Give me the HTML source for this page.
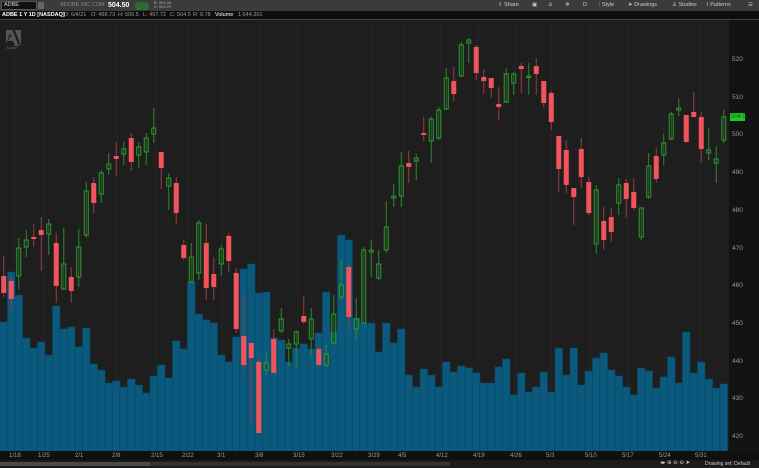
<!DOCTYPE html>
<html><head><meta charset="utf-8"><style>
*{margin:0;padding:0;box-sizing:border-box}
body{width:759px;height:468px;overflow:hidden;background:#1e1e1e;font-family:"Liberation Sans",sans-serif;position:relative}
.top{position:absolute;left:0;top:0;width:759px;height:11px;background:#3b3b3b}
.info{position:absolute;left:0;top:11px;width:759px;height:9px;background:#0e0e0e;border-bottom:1px solid #444}
.t{position:absolute;font-size:5.5px;color:#ccc;white-space:nowrap;line-height:1}
.ax{position:absolute;font-size:6.5px;color:#9a9a9a;line-height:1}
.rp{position:absolute;left:729px;top:20px;width:30px;height:431px;background:#131313}
.xa{position:absolute;left:0;top:451px;width:759px;height:9px;background:#101010}
.bb{position:absolute;left:0;top:460px;width:759px;height:8px;background:#1b1b1b}
</style></head><body>
<div class="top">
 <div style="position:absolute;left:1px;top:1px;width:36px;height:9px;background:#111;border:1px solid #555"></div>
 <div class="t" style="left:4px;top:3px;color:#ddd">ADBE</div>
 <div style="position:absolute;left:38px;top:2px;width:6px;height:7px;background:#666"></div>
 <div class="t" style="left:60px;top:3px;color:#888">ADOBE INC COM</div>
 <div class="t" style="left:108px;top:2px;color:#fff;font-weight:bold;font-size:7px">504.50</div>
 <div style="position:absolute;left:135px;top:2px;width:14px;height:8px;background:#2f6a35;border-radius:3px"></div>
 <div class="t" style="left:154px;top:1px;font-size:4px;color:#aaa">B: 504.36<br>A: 504.29</div>
 <div class="t" style="left:498px;top:3px">⇪ Share</div>
 <div class="t" style="left:532px;top:3px">▣</div>
 <div class="t" style="left:548px;top:3px">♙</div>
 <div class="t" style="left:565px;top:3px">✲</div>
 <div class="t" style="left:583px;top:3px">D</div>
 <div class="t" style="left:599px;top:3px">⫶ Style</div>
 <div class="t" style="left:628px;top:3px">➤ Drawings</div>
 <div class="t" style="left:672px;top:3px">♙ Studies</div>
 <div class="t" style="left:706px;top:3px">⌇ Patterns</div>
 <div class="t" style="left:748px;top:3px">☰</div>
</div>
<div class="info">
 <div class="t" style="left:2px;top:2px;color:#fff;font-weight:bold">ADBE 1 Y 1D [NASDAQ]</div>
 <div class="t" style="left:64px;top:2px;color:#999">D: 6/4/21</div>
 <div class="t" style="left:91px;top:2px;color:#999">O: 498.73</div>
 <div class="t" style="left:118px;top:2px;color:#999">H: 506.5</div>
 <div class="t" style="left:143px;top:2px;color:#999">L: 497.72</div>
 <div class="t" style="left:170px;top:2px;color:#999">C: 504.5</div>
 <div class="t" style="left:193px;top:2px;color:#999">R: 8.78</div>
 <div class="t" style="left:215px;top:2px;color:#fff">Volume</div>
 <div class="t" style="left:238px;top:2px;color:#999">1,644,301</div>
</div>
<div class="rp"></div>
<svg id="ch" width="729" height="431" style="position:absolute;left:0;top:20px" viewBox="0 20 729 431"></svg>
<svg width="20" height="22" style="position:absolute;left:4px;top:28px"><path d="M2 2h6l7 16h-4l-2-5h-5l2-4h2l-2-4-4 11H2z M11 2h6v16z" fill="#555"/><text x="2" y="21" font-size="4" fill="#666" font-family="Liberation Sans">Adobe</text></svg>
<div style="position:absolute;left:730px;top:113px;width:15px;height:8px;background:#22c922"></div>
<div class="ax" style="left:731px;top:114px;color:#062;font-size:6px">504.5</div>
<div id="yl"></div>
<div class="xa"></div>
<div id="xl"></div>
<div class="bb">
 <div style="position:absolute;left:0;top:2px;width:150px;height:4px;background:#4a4a4a"></div>
 <div style="position:absolute;left:150px;top:2px;width:300px;height:4px;background:#333"></div>
 <div class="t" style="left:660px;top:1px;color:#ccc">◂▸ ⊕ ⊖ ⊖ ➤</div>
 <div class="t" style="left:705px;top:2px;font-size:5px">Drawing set: Default</div>
</div>
<script>
var C=[["r",256,297,276,293],["r",276,310,281,299],["g",238,290,248,276],["g",230,257,240,247],["r",224,247,237,239],["r",217,271,230,235],["g",219,255,224,234],["r",233,303,243,286],["g",228,290,264,289],["r",267,303,277,291],["g",229,287,247,277],["g",182,238,191,235],["r",177,213,183,203],["g",170,203,173,194],["g",153,175,164,169],["r",142,176,156,159],["g",142,165,149,154],["r",133,171,138,162],["g",142,168,147,155],["g",133,165,138,152],["g",108,143,128,134],["r",152,189,152,168],["g",173,210,178,186],["r",177,224,183,213],["r",240,260,245,258],["g",243,283,257,282],["g",220,280,223,273],["r",224,300,243,288],["r",257,300,274,287],["g",245,276,249,264],["r",233,272,236,261],["r",268,333,273,329],["r",295,370,336,365],["r",343,423,343,358],["r",358,433,362,433],["g",352,375,363,370],["r",329,373,339,373],["g",308,333,319,331],["g",339,367,344,348],["g",330,368,332,344],["r",296,324,316,322],["g",308,357,319,339],["r",347,366,349,365],["g",345,367,354,365],["g",295,344,314,343],["g",260,300,285,297],["r",264,330,267,317],["g",298,340,319,329],["g",247,323,250,323],["g",240,277,250,252],["g",250,280,264,278],["g",201,253,227,250],["g",184,207,196,198],["g",152,207,166,196],["r",151,183,163,167],["g",154,180,158,161],["r",117,141,133,135],["g",117,163,119,141],["g",107,140,110,138],["g",68,110,78,109],["r",67,101,81,94],["g",42,77,45,76],["g",38,63,40,43],["r",45,80,47,73],["r",69,94,77,81],["r",78,98,78,88],["r",87,120,104,107],["g",68,103,74,102],["g",72,95,74,83],["r",63,93,66,69],["g",63,95,76,77],["r",58,95,66,74],["r",81,107,81,103],["r",91,130,93,122],["r",136,192,136,169],["r",140,193,150,185],["r",188,225,188,197],["r",138,188,149,177],["r",177,215,182,213],["g",185,254,190,244],["r",207,250,221,240],["r",208,242,217,232],["g",178,215,185,203],["r",179,217,183,199],["r",178,210,192,208],["g",207,240,208,237],["g",153,199,166,197],["r",148,183,156,179],["g",134,165,143,155],["g",112,140,114,139],["g",98,116,108,110],["r",115,143,115,142],["r",92,117,112,117],["r",112,163,117,149],["g",128,160,150,153],["g",146,183,159,163],["g",110,143,117,140]];
var V=[322,272,295,338,348,342,355,306,329,327,347,328,364,370,383,381,387,379,385,393,376,365,378,341,349,282,314,320,323,355,362,337,269,264,293,292,338,340,362,348,344,349,333,292,332,235,240,318,323,323,352,323,343,329,375,387,369,375,387,362,372,366,368,373,383,383,367,359,395,373,392,387,372,392,348,375,348,385,371,358,353,370,376,387,395,368,371,388,377,357,383,332,373,362,379,388,384];
var s='<rect x="0" y="20" width="729" height="431" fill="#1e1e1e"/>';
var wk=[14,43,80,117,156,187,222,260,298,336,373,403,441,478,515,551,590,627,664,700];
wk.forEach(function(x){s+='<line x1="'+x+'" x2="'+x+'" y1="20" y2="451" stroke="#252525" stroke-width="1"/>';});
V.forEach(function(v,i){s+='<rect x="'+(i*7.5)+'" y="'+v+'" width="7.5" height="'+(451-v)+'" fill="#0b5a7d" stroke="#084a68" stroke-width="0.6"/>';});
C.forEach(function(c,i){var x=3.75+i*7.5,col=c[0]=="r"?"#f2545d":"#2f9a2f",wc=c[0]=="r"?"#9a3c40":"#2a8a2a";
s+='<line x1="'+x+'" x2="'+x+'" y1="'+c[1]+'" y2="'+c[2]+'" stroke="'+wc+'" stroke-width="1"/>';
var h=Math.max(c[4]-c[3],1.5);
if(c[0]=="r")s+='<rect x="'+(x-2.5)+'" y="'+c[3]+'" width="5" height="'+h+'" fill="'+col+'"/>';
else s+='<rect x="'+(x-2)+'" y="'+c[3]+'" width="4" height="'+h+'" fill="#1e1e1e" fill-opacity="0.3" stroke="'+col+'" stroke-width="1"/>';});
document.getElementById('ch').innerHTML=s;
var y='';for(var k=0;k<=10;k++){var p=520-10*k;y+='<div class="ax" style="left:732px;top:'+(57+37.7*k)+'px">'+p+'</div>';}
document.getElementById('yl').innerHTML=y;
var L=["1/18","1/25","2/1","2/8","2/15","2/22","3/1","3/8","3/15","3/22","3/29","4/5","4/12","4/19","4/26","5/3","5/10","5/17","5/24","5/31"],x='';
L.forEach(function(l,i){x+='<div class="ax" style="left:'+(wk[i]-5)+'px;top:453px;font-size:6px">'+l+'</div>';});
document.getElementById('xl').innerHTML=x;
</script>
</body></html>
